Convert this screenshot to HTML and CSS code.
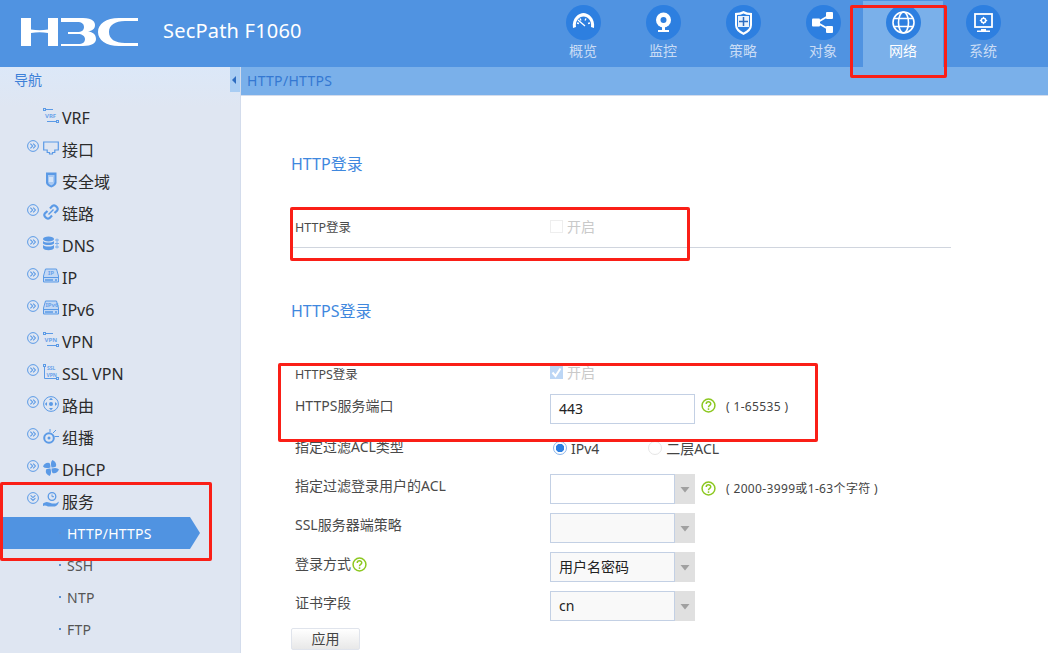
FILE: index.html
```html
<!DOCTYPE html>
<html lang="zh-CN">
<head>
  <meta charset="UTF-8">
  <meta name="viewport" content="width=device-width, initial-scale=1.0">
  <title>SecPath F1060</title>
  <link rel="stylesheet" href="styles.css">
</head>
<body>
  <svg class="sprite" width="0" height="0">
    <symbol id="expand" viewBox="0 0 12 12">
      <circle cx="6" cy="6" r="5.4" fill="none" stroke="#5b9ae6"/>
      <path d="M3.4 3.6 5.6 6 3.4 8.4M6.2 3.6 8.4 6 6.2 8.4" fill="none" stroke="#5b9ae6" stroke-width="1.1"/>
    </symbol>
    <symbol id="open" viewBox="0 0 12 12">
      <circle cx="6" cy="6" r="5.4" fill="none" stroke="#5b9ae6"/>
      <path d="M3.6 3.4 6 5.6 8.4 3.4M3.6 6.2 6 8.4 8.4 6.2" fill="none" stroke="#5b9ae6" stroke-width="1.1"/>
    </symbol>
    <symbol id="help" viewBox="0 0 14 14">
      <circle cx="7" cy="7" r="6" fill="#fff" stroke="#8cc820" stroke-width="1.4"/>
      <path d="M4.9 5.5C4.9 3 9.1 3 9.1 5.4 9.1 7 7 6.9 7 8.6" fill="none" stroke="#8cc820" stroke-width="1.4"/>
      <rect x="6.3" y="9.6" width="1.4" height="1.5" fill="#8cc820"/>
    </symbol>
    <symbol id="arrow" viewBox="0 0 20 30">
      <rect width="20" height="30" fill="#e0e0e0"/>
      <path d="M5.500 13h9L10 18.500z" fill="#a0a0a0"/>
    </symbol>
  </svg>

  <header class="topbar">
    <svg class="logo" width="118" height="30" viewBox="0 0 118 30" fill="#fff">
      <rect x="0" y="1" width="10" height="28"/>
      <rect x="27" y="1" width="10" height="28"/>
      <path d="M10 12.500q8.500 1.500 17 0V16q-8.500-1.500-17 0z"/>
      <path d="M40 1h22c10 0 12 4 12 7 0 4-3 6-7 6.500 5 .5 8 3 8 7.500 0 4-4 7-13 7H40v-2h17c5 0 7-2 7-5 0-3-3-5-7-5H47v-2h9c5 0 7-2 7-5 0-3-2-5-7-5H40z"/>
      <path d="M117 1H98C85 1 77 7 77 15s8 14 21 14h19v-3h-13c-10 0-16-4-16-11s6-11 16-11h13z"/>
    </svg>
    <span class="product">SecPath F1060</span>
    <nav class="tabs">
      <a class="tab">
        <svg class="tab-icon" viewBox="0 0 35 35"><circle cx="17.500" cy="17.500" r="17.500" fill="#2d7fe0"/><path d="M7 23C5.500 13 13 8 17.500 8S29.500 13 28 23l-3-1C26 16 22 11.500 17.500 11.500S9 16 10 22z" fill="#fff"/><path d="M12 15l7 6M11 18l2 .5M14 13.500l1 2M20 13.500l-1 2M24 18l-2 .5" stroke="#fff" stroke-width="1.300"/></svg>
        <span>概览</span>
      </a>
      <a class="tab">
        <svg class="tab-icon" viewBox="0 0 35 35"><circle cx="17.500" cy="17.500" r="17.500" fill="#2d7fe0"/><circle cx="17.500" cy="15" r="7.500" fill="#fff"/><circle cx="17.500" cy="15" r="3" fill="#2d7fe0"/><path d="M16 22h3v3h4v2H12v-2h4z" fill="#fff"/></svg>
        <span>监控</span>
      </a>
      <a class="tab">
        <svg class="tab-icon" viewBox="0 0 35 35"><circle cx="17.500" cy="17.500" r="17.500" fill="#2d7fe0"/><path d="M9 8q5 0 8.500-2Q21 8 26 8v12q0 6-8.500 10Q9 26 9 20z" fill="#fff"/><path d="M11 10q4 0 6.500-1.500Q20 10 24 10v10q0 4-6.500 7.500Q11 24 11 20z" fill="#2d7fe0"/><rect x="12" y="11" width="11" height="11" fill="#eaf2fc"/><path d="M17.500 12v9M13 16.500h9" stroke="#2d6cc0" stroke-width="1.500"/></svg>
        <span>策略</span>
      </a>
      <a class="tab">
        <svg class="tab-icon" viewBox="0 0 35 35"><circle cx="17.500" cy="17.500" r="17.500" fill="#2d7fe0"/><path d="M11 17.500 24 10M11 17.500 24 25" stroke="#fff" stroke-width="2"/><rect x="6" y="13.500" width="8" height="8" rx="1" fill="#fff"/><rect x="20" y="7" width="7" height="7" rx="1" fill="#fff"/><rect x="20" y="21" width="7" height="7" rx="1" fill="#fff"/></svg>
        <span>对象</span>
      </a>
      <a class="tab tab-active">
        <svg class="tab-icon" viewBox="0 0 35 35"><circle cx="17.500" cy="17.500" r="17.500" fill="#2d7fe0"/><g fill="none" stroke="#fff" stroke-width="1.600"><circle cx="17.500" cy="17.500" r="10.500"/><ellipse cx="17.500" cy="17.500" rx="5" ry="10.500"/><path d="M8 13.500h19M8 21.500h19"/></g></svg>
        <span>网络</span>
      </a>
      <a class="tab">
        <svg class="tab-icon" viewBox="0 0 35 35"><circle cx="17.500" cy="17.500" r="17.500" fill="#2d7fe0"/><rect x="9" y="9" width="17" height="13" fill="none" stroke="#fff" stroke-width="1.800"/><circle cx="17.500" cy="15.500" r="2.200" fill="none" stroke="#fff" stroke-width="1.600"/><path d="M17.500 11.800v7.400M13.800 15.500h7.400" stroke="#fff" stroke-width="1" stroke-dasharray="1.200 5"/><path d="M15 24h5v1.500h4V27H11v-1.500h4z" fill="#fff"/></svg>
        <span>系统</span>
      </a>
    </nav>
  </header>

  <div class="layout">
    <aside class="sidebar">
      <div class="sidebar-title">导航</div>
      <ul class="menu">
        <li class="menu-item">
          <span class="expander"></span>
          <svg class="menu-icon" viewBox="0 0 16 16"><g fill="none" stroke="#5b9ae6"><rect x="0.500" y="0.500" width="2" height="2"/><rect x="13.500" y="12.500" width="2" height="2"/><path d="M3 1.500h7M4 13.500h9"/></g><text x="2" y="10" class="icon-text">VRF</text></svg>
          <span class="latin">VRF</span>
        </li>
        <li class="menu-item">
          <svg class="expander" viewBox="0 0 12 12"><use href="#expand"/></svg>
          <svg class="menu-icon" viewBox="0 0 16 16"><path d="M.700 2h14.600v8h-3.500v2.500H9.500V14h-3v-1.500H4.200V10H.700z" fill="none" stroke="#5b9ae6" stroke-width="1.200"/></svg>
          接口
        </li>
        <li class="menu-item">
          <span class="expander"></span>
          <svg class="menu-icon" viewBox="0 0 16 16"><path d="M3 .500h10.500v10q0 3-5.200 5-5.300-2-5.300-5z" fill="#5b9ae6"/><path d="M5 3h6.500v7q0 2-3.200 3.500Q5 12 5 10z" fill="#a9c9f2"/><path d="M7 5v5M9 5v5" stroke="#fff"/></svg>
          安全域
        </li>
        <li class="menu-item">
          <svg class="expander" viewBox="0 0 12 12"><use href="#expand"/></svg>
          <svg class="menu-icon" viewBox="0 0 16 16"><g fill="none" stroke="#5b9ae6" stroke-width="2.200"><path d="M7 4.500l2.500-2.700q1.500-1 3 0l1.700 1.700q1 1.500 0 3L11.500 9"/><path d="M9 11.500l-2.500 2.700q-1.500 1-3 0l-1.700-1.700q-1-1.500 0-3L4.500 7"/><path d="M5.500 10.500l5-5" stroke-width="1.500"/></g></svg>
          链路
        </li>
        <li class="menu-item">
          <svg class="expander" viewBox="0 0 12 12"><use href="#expand"/></svg>
          <svg class="menu-icon" viewBox="0 0 16 16"><g fill="#5b9ae6"><ellipse cx="5.500" cy="3" rx="5.500" ry="2.500"/><path d="M0 5c2 2 9 2 11 0v2.500c-2 2-9 2-11 0zM0 9c2 2 9 2 11 0v3c-1 3-10 3-11 0z"/></g><path d="M12 4h4M12 7.500h4M12 11h4M14 2.500v10" stroke="#7cb0ee"/></svg>
          <span class="latin">DNS</span>
        </li>
        <li class="menu-item">
          <svg class="expander" viewBox="0 0 12 12"><use href="#expand"/></svg>
          <svg class="menu-icon" viewBox="0 0 16 16"><path d="M2.500 1h11l2 7v6H.500V8z" fill="#c3d8f4" stroke="#5b9ae6"/><path d="M.500 9.500h15" stroke="#5b9ae6"/><path d="M2 12h8M12 12h2" stroke="#5b9ae6" stroke-width="1.500"/><text x="5" y="7" class="icon-text">IP</text></svg>
          <span class="latin">IP</span>
        </li>
        <li class="menu-item">
          <svg class="expander" viewBox="0 0 12 12"><use href="#expand"/></svg>
          <svg class="menu-icon" viewBox="0 0 16 16"><path d="M2.500 1h11l2 7v6H.500V8z" fill="#c3d8f4" stroke="#5b9ae6"/><path d="M.500 9.500h15" stroke="#5b9ae6"/><path d="M2 12h8M12 12h2" stroke="#5b9ae6" stroke-width="1.500"/><text x="2.500" y="7" class="icon-text">IPv6</text></svg>
          <span class="latin">IPv6</span>
        </li>
        <li class="menu-item">
          <svg class="expander" viewBox="0 0 12 12"><use href="#expand"/></svg>
          <svg class="menu-icon" viewBox="0 0 16 16"><g fill="none" stroke="#5b9ae6"><rect x="0.500" y="0.500" width="2" height="2"/><rect x="13.500" y="12.500" width="2" height="2"/><path d="M3 1.500h7M4 13.500h9"/></g><text x="1.500" y="10" class="icon-text">VPN</text></svg>
          <span class="latin">VPN</span>
        </li>
        <li class="menu-item">
          <svg class="expander" viewBox="0 0 12 12"><use href="#expand"/></svg>
          <svg class="menu-icon" viewBox="0 0 16 16"><g fill="none" stroke="#5b9ae6"><rect x="0.500" y="0.500" width="2" height="2"/><rect x="13.500" y="13.500" width="2" height="2"/><path d="M1.500 3v11.500H13"/></g><text x="4" y="6" class="icon-text icon-text-small">SSL</text><text x="3.500" y="13" class="icon-text icon-text-small">VPN</text></svg>
          <span class="latin">SSL VPN</span>
        </li>
        <li class="menu-item">
          <svg class="expander" viewBox="0 0 12 12"><use href="#expand"/></svg>
          <svg class="menu-icon" viewBox="0 0 16 16"><circle cx="8" cy="8" r="7.400" fill="none" stroke="#5b9ae6"/><circle cx="8" cy="8" r="2" fill="#5b9ae6"/><path d="M8 1.800 10 4H6zM8 14.200 10 12H6zM1.800 8 4 6v4zM14.200 8 12 6v4z" fill="#5b9ae6"/></svg>
          路由
        </li>
        <li class="menu-item">
          <svg class="expander" viewBox="0 0 12 12"><use href="#expand"/></svg>
          <svg class="menu-icon" viewBox="0 0 16 16"><circle cx="6" cy="10" r="4.800" fill="none" stroke="#5b9ae6" stroke-width="2"/><circle cx="6" cy="10" r="1.500" fill="#5b9ae6"/><path d="M10 5l3-3M11.500 8.500H16M7 4V1" stroke="#5b9ae6"/></svg>
          组播
        </li>
        <li class="menu-item">
          <svg class="expander" viewBox="0 0 12 12"><use href="#expand"/></svg>
          <svg class="menu-icon" viewBox="0 0 16 16"><path d="M7.500 7.500Q2 9 0 6.500q2-4.500 6.500-3.500 1.200 2 1 4.500zM8.500 7.500Q7 2 9.500 0q4.500 2 3.500 6.500-2 1.200-4.500 1zM8.500 8.500q5.500-1.500 7.500 1-2 4.500-6.500 3.500-1.200-2-1-4.500zM7.500 8.500q1.500 5.500-1 7.500-4.500-2-3.500-6.500 2-1.200 4.500-1z" fill="#5b9ae6"/></svg>
          <span class="latin">DHCP</span>
        </li>
        <li class="menu-item">
          <svg class="expander" viewBox="0 0 12 12"><use href="#open"/></svg>
          <svg class="menu-icon" viewBox="0 0 16 16"><circle cx="9" cy="4.500" r="3.800" fill="none" stroke="#5b9ae6" stroke-width="1.300"/><path d="M9 2.500v2.200h2" fill="none" stroke="#5b9ae6"/><path d="M0 11.500q3-2.500 6-1l3 1h4l3-2q-1 4-4 5H5Q2 13 0 14z" fill="#5b9ae6"/></svg>
          服务
        </li>
        <li class="menu-sub menu-sub-active">HTTP/HTTPS</li>
        <li class="menu-sub">SSH</li>
        <li class="menu-sub">NTP</li>
        <li class="menu-sub">FTP</li>
      </ul>
    </aside>

    <div class="workspace">
      <div class="crumb">
        <span class="collapse"></span>
        <span class="crumb-text">HTTP/HTTPS</span>
      </div>
      <main class="content">
        <h2 class="section-title">HTTP登录</h2>
        <div class="switch-row switch-row-line">
          <label class="field-label field-label-small">HTTP登录</label>
          <span class="check"></span>
          <span class="muted">开启</span>
        </div>

        <h2 class="section-title section-title-next">HTTPS登录</h2>
        <div class="switch-row switch-row-next">
          <label class="field-label field-label-small">HTTPS登录</label>
          <span class="check check-on">
            <svg width="13" height="13" viewBox="0 0 13 13"><path d="M2.500 6.500 5.500 10 10.500 2.500" fill="none" stroke="#fff" stroke-width="2"/></svg>
          </span>
          <span class="muted">开启</span>
        </div>
        <div class="form-row form-row-port">
          <label class="field-label">HTTPS服务端口</label>
          <div class="input input-plain">443</div>
          <svg class="help" viewBox="0 0 14 14"><use href="#help"/></svg>
          <span class="hint">( 1-65535 )</span>
        </div>
        <div class="form-row form-row-radio">
          <label class="field-label">指定过滤ACL类型</label>
          <span class="radio radio-on"></span>
          <span class="radio-text">IPv4</span>
          <span class="radio"></span>
          <span class="radio-text">二层ACL</span>
        </div>
        <div class="form-row form-row-acl">
          <label class="field-label">指定过滤登录用户的ACL</label>
          <div class="select"><span class="select-value select-white"></span><svg class="select-arrow" viewBox="0 0 20 30"><use href="#arrow"/></svg></div>
          <svg class="help" viewBox="0 0 14 14"><use href="#help"/></svg>
          <span class="hint">( 2000-3999或1-63个字符 )</span>
        </div>
        <div class="form-row">
          <label class="field-label">SSL服务器端策略</label>
          <div class="select"><span class="select-value"></span><svg class="select-arrow" viewBox="0 0 20 30"><use href="#arrow"/></svg></div>
        </div>
        <div class="form-row">
          <label class="field-label">登录方式<svg class="help help-inline" viewBox="0 0 14 14"><use href="#help"/></svg></label>
          <div class="select"><span class="select-value">用户名密码</span><svg class="select-arrow" viewBox="0 0 20 30"><use href="#arrow"/></svg></div>
        </div>
        <div class="form-row">
          <label class="field-label">证书字段</label>
          <div class="select"><span class="select-value">cn</span><svg class="select-arrow" viewBox="0 0 20 30"><use href="#arrow"/></svg></div>
        </div>
        <button class="apply" type="button">应用</button>
      </main>
    </div>
  </div>

  <!-- red marks drawn over the screenshot -->
  <div class="mark mark-tab"></div>
  <div class="mark mark-http"></div>
  <div class="mark mark-https"></div>
  <div class="mark mark-menu"></div>
</body>
</html>
```

FILE: styles.css
```css
* {
  box-sizing: border-box;
}
html, body {
  margin: 0;
  height: 653px;
  overflow: hidden;
}
body {
  position: relative;
  font-family: "Noto Sans", "Noto Sans CJK SC", sans-serif;
  font-size: 14px;
  color: #444;
  background: #fff;
}
.sprite {
  position: absolute;
}

/* top bar */
.topbar {
  display: flex;
  align-items: flex-start;
  height: 67px;
  background: #5093e1;
  color: #fff;
}
.logo {
  margin: 17px 0 0 21px;
  flex: none;
}
.product {
  margin: 16px 0 0 24px;
  font-size: 20px;
  letter-spacing: .2px;
  line-height: 30px;
}
.tabs {
  display: flex;
  margin-left: auto;
  margin-right: 25px;
}
.tab {
  display: flex;
  flex-direction: column;
  align-items: center;
  width: 80px;
  height: 67px;
  padding-top: 5px;
  color: #c9dcf5;
  font-size: 14px;
}
.tab span {
  margin-top: 1px;
  line-height: 20px;
}
.tab-active {
  height: 66px;
  margin-top: 1px;
  padding-top: 4px;
  background: #7ab0ea;
  color: #fff;
}
.tab-icon {
  width: 35px;
  height: 35px;
}

/* sidebar */
.layout {
  display: flex;
  height: 586px;
}
.sidebar {
  flex: none;
  width: 241px;
  border-right: 1px solid #d3dcec;
  background: linear-gradient(#dce8f8, #dfe6f2 40px);
}
.sidebar-title {
  height: 34px;
  padding-left: 14px;
  color: #3d80d8;
  font-size: 14px;
  line-height: 25px;
}
.menu {
  margin: 0;
  padding: 0;
  list-style: none;
}
.menu-item {
  display: flex;
  align-items: center;
  height: 32px;
  padding-left: 27px;
  color: #2b2b2b;
  font-size: 16px;
}
.latin {
  margin-top: 2px;
}
.expander {
  flex: none;
  width: 12px;
  height: 12px;
  margin: -6px 4px 0 0;
}
.menu-icon {
  flex: none;
  width: 16px;
  height: 16px;
  margin: -3px 3px 0 0;
}
.icon-text {
  font-size: 6px;
  font-weight: 700;
  fill: #6aa3ea;
}
.icon-text-small {
  font-size: 5px;
}
.menu-sub {
  position: relative;
  height: 32px;
  padding-left: 67px;
  color: #555;
  font-size: 14px;
  letter-spacing: .25px;
  line-height: 34px;
}
.menu-sub::before {
  content: "";
  position: absolute;
  left: 59px;
  top: 15px;
  width: 2px;
  height: 2px;
  background: #5b8fd0;
}
.menu-sub-active {
  width: 200px;
  background: #5093e1;
  color: #fff;
  clip-path: polygon(0 0, 190px 0, 200px 50%, 190px 100%, 0 100%);
}

/* right part */
.workspace {
  flex: 1;
  min-width: 0;
}
.crumb {
  display: flex;
  height: 29px;
  background: #7ab0ea;
  border-bottom: 1px solid #d3dcec;
}
.collapse {
  position: relative;
  width: 10px;
  height: 25px;
  margin-left: -11px;
  background: #a9cdf3;
}
.collapse::after {
  content: "";
  position: absolute;
  left: 2px;
  top: 9px;
  border: 4px solid transparent;
  border-left: 0;
  border-right: 4px solid #2d6cc0;
}
.crumb-text {
  margin-left: 7px;
  color: #3478d2;
  font-size: 14px;
  letter-spacing: .3px;
  line-height: 28px;
}
.content {
  width: 710px;
  padding: 56px 0 0 51px;
}
.section-title {
  height: 24px;
  margin: 0 0 0 -1px;
  color: #3f88de;
  font-size: 16px;
  font-weight: 400;
  line-height: 24px;
}
.section-title-next {
  margin-top: 51px;
}
.switch-row {
  display: flex;
  align-items: center;
  height: 24px;
}
.switch-row-line {
  height: 33px;
  margin-top: 39px;
  padding-bottom: 8px;
  border-bottom: 1px solid #d0d5de;
}
.switch-row-next {
  margin-top: 38px;
}
.field-label {
  flex: none;
  display: flex;
  align-items: center;
  width: 258px;
  padding-left: 3px;
  color: #4a4a4a;
  font-size: 14px;
  line-height: 24px;
}
.field-label-small {
  font-size: 12.500px;
  padding-top: 2px;
}
.switch-row-next .field-label-small {
  padding-top: 4px;
}
.check {
  flex: none;
  display: flex;
  width: 13px;
  height: 13px;
  margin-top: -2px;
  border: 1px solid #eee;
}
.check-on {
  border: 0;
  background: #bcd6f5;
}
.muted {
  margin: -3px 0 0 4px;
  color: #c9c9c9;
  font-size: 14px;
}
.form-row {
  display: flex;
  align-items: flex-start;
  height: 30px;
  margin-top: 9px;
}
.form-row-radio {
  align-items: center;
  height: 24px;
  margin-top: 13px;
}
.form-row-acl {
  margin-top: 13px;
}
.form-row-radio .field-label {
  margin-top: -4px;
}
.input {
  width: 145px;
  height: 30px;
  border: 1px solid #c3d0e4;
  padding-left: 8px;
  color: #222;
  line-height: 28px;
}
.select {
  display: flex;
  width: 145px;
  height: 30px;
}
.select-value {
  flex: 1;
  border: 1px solid #c3d0e4;
  padding-left: 8px;
  background: #f9f9f9;
  color: #222;
  line-height: 27px;
}
.select-white {
  background: #fff;
}
.select-arrow {
  flex: none;
  width: 20px;
  height: 30px;
}
.help {
  flex: none;
  width: 15px;
  height: 15px;
  margin: 4px 0 0 6px;
}
.help-inline {
  margin: 0 0 0 1px;
}
.form-row-acl .help {
  margin-top: 7px;
}
.hint {
  margin-left: 10px;
  color: #444;
  font-size: 12px;
  letter-spacing: .35px;
  line-height: 26px;
  white-space: nowrap;
}
.form-row-acl .hint {
  line-height: 30px;
}
.radio {
  flex: none;
  width: 14px;
  height: 14px;
  margin: -2px 0 0 3px;
  border: 1px solid #e6e6e6;
  border-radius: 50%;
}
.radio-on {
  border-color: #8ab4ea;
  background: radial-gradient(circle, #2d7fe0 0 4px, #fff 4.500px);
}
.radio-text {
  margin: -2px 46px 0 4px;
  color: #444;
  font-size: 14px;
}
.apply {
  display: block;
  width: 69px;
  height: 22px;
  margin: 7px 0 0 -1px;
  padding: 0;
  border: 1px solid #e0e4ec;
  border-radius: 2px;
  background: linear-gradient(#fff, #e8e8e8);
  color: #444;
  font-family: inherit;
  font-size: 14px;
  line-height: 20px;
}

/* annotations */
.mark {
  position: absolute;
  border: 3px solid #fa1f17;
  border-radius: 2px;
}
.mark-tab {
  left: 850px;
  top: 5px;
  width: 97px;
  height: 73px;
}
.mark-http {
  left: 290px;
  top: 207px;
  width: 400px;
  height: 54px;
}
.mark-https {
  left: 278px;
  top: 363px;
  width: 540px;
  height: 79px;
}
.mark-menu {
  left: 0;
  top: 482px;
  width: 212px;
  height: 79px;
}
```
